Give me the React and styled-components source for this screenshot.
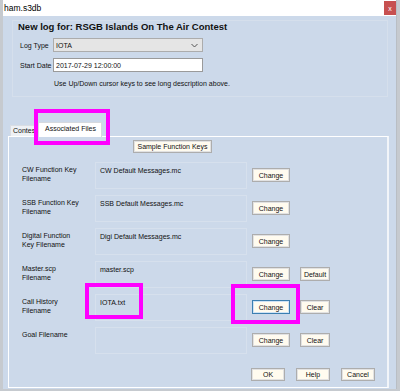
import styled, { createGlobalStyle } from "styled-components";

const GlobalStyle = createGlobalStyle`
  html, body {
    margin: 0;
    padding: 0;
    background: #c9cdd2;
  }
  * {
    box-sizing: border-box;
  }
`;

const Desktop = styled.div`
  position: relative;
  width: 400px;
  height: 391px;
  padding-left: 3px;
  background: #c6cacf;
  overflow: hidden;
  font-family: "Liberation Sans", Arial, sans-serif;
  color: #111;
`;

const Window = styled.div`
  width: 394px;
  height: 389px;
  display: flex;
  flex-direction: column;
  background: #ccd9ea;
  border-right: 1px solid #b9bec4;
`;

const TitleBar = styled.div`
  height: 16px;
  flex: none;
  display: flex;
  align-items: center;
  justify-content: space-between;
  background: #fff;
  padding-left: 1px;
  font-size: 8.5px;
  color: #000;
`;

const CloseButton = styled.div`
  width: 12px;
  height: 14px;
  margin-top: 1px;
  align-self: flex-start;
  background: #c75050;
  color: #fff;
  font-size: 7px;
  display: flex;
  align-items: center;
  justify-content: center;
`;

const Body = styled.div`
  flex: 1;
  display: flex;
  flex-direction: column;
  padding: 4px 0 0 0;
`;

const HeaderGroup = styled.div`
  margin-left: 9px;
  width: 376px;
  height: 77px;
  border: 1px solid #d5dfec;
  padding: 0 0 0 5px;
  display: flex;
  flex-direction: column;
`;

const Heading = styled.div`
  font-size: 9.5px;
  font-weight: bold;
  line-height: 12px;
  margin-bottom: 5px;
`;

const FieldRow = styled.div`
  display: flex;
  align-items: center;
  padding-left: 2px;
  margin-bottom: ${(p) => p.$gap || 0}px;
`;

const FieldLabel = styled.div`
  width: 33px;
  font-size: 7px;
  white-space: nowrap;
`;

const Select = styled.div`
  width: 150px;
  height: 14px;
  background: #e5e5e5;
  border: 1px solid #acacac;
  display: flex;
  align-items: center;
  justify-content: space-between;
  padding: 0 4px 0 2px;
  font-size: 7px;
`;

const Input = styled.div`
  width: 150px;
  height: 14px;
  background: #fff;
  border: 1px solid #9a9a9a;
  display: flex;
  align-items: center;
  padding-left: 2px;
  font-size: 7px;
`;

const Hint = styled.div`
  font-size: 7px;
  line-height: 9px;
  padding-left: 36px;
  margin-top: 7px;
`;

const TabStrip = styled.div`
  display: flex;
  align-items: flex-end;
  margin-top: 24px;
  padding-left: 7px;
  height: 15px;
  position: relative;
  z-index: 1;
`;

const Tab = styled.div`
  height: ${(p) => (p.$active ? 15 : 11)}px;
  width: ${(p) => (p.$active ? 64 : 30)}px;
  margin-left: ${(p) => (p.$active ? -2 : 0)}px;
  margin-bottom: ${(p) => (p.$active ? -1 : 0)}px;
  background: ${(p) => (p.$active ? "#fff" : "#eef1f5")};
  border: 1px solid ${(p) => (p.$active ? "#d6d9de" : "#d9dde3")};
  border-bottom: none;
  padding-left: ${(p) => (p.$active ? 6 : 2)}px;
  font-size: 7px;
  line-height: ${(p) => (p.$active ? 12 : 10)}px;
  white-space: nowrap;
  overflow: hidden;
  position: relative;
  z-index: ${(p) => (p.$active ? 2 : 1)};
`;

const Panel = styled.div`
  margin-left: 5px;
  width: 381px;
  border: 1px solid #fff;
  border-right: 2px solid #f2f5f9;
  padding: 3px 12px 6px 13px;
  display: flex;
  flex-direction: column;
`;

const Button = styled.div`
  width: ${(p) => p.$w || 38}px;
  height: ${(p) => p.$h || 14}px;
  flex: none;
  background: #fffbef;
  border: 1px solid ${(p) => (p.$focus ? "#3c7fb1" : "#adadad")};
  box-shadow: inset 0 0 0 1px ${(p) => (p.$focus ? "#cfe3f5" : "#e2e2e2")};
  display: flex;
  align-items: center;
  justify-content: center;
  font-size: 7px;
  white-space: nowrap;
`;

const SampleRow = styled.div`
  padding-left: 111px;
  margin-bottom: 9px;
`;

const FileList = styled.div`
  display: flex;
  flex-direction: column;
  gap: 6px;
`;

const FileRow = styled.div`
  display: flex;
  align-items: flex-start;
  height: 27px;
`;

const FileLabel = styled.div`
  width: 73px;
  padding-top: 3px;
  font-size: 7px;
  line-height: 9px;
`;

const ValueBox = styled.div`
  width: 152px;
  height: 27px;
  border: 1px solid #d6e0ed;
  padding: 3px 4px 0;
  font-size: 7px;
  line-height: 9px;
`;

const ButtonGroup = styled.div`
  display: flex;
  gap: 10px;
  margin-left: 5px;
  margin-top: 6px;
`;

const Footer = styled.div`
  display: flex;
  justify-content: flex-end;
  gap: 11px;
  margin-top: 14px;
`;

const Marker = styled.div`
  position: absolute;
  left: ${(p) => p.$x}px;
  top: ${(p) => p.$y}px;
  width: ${(p) => p.$w}px;
  height: ${(p) => p.$h}px;
  border: 4px solid #ff00ff;
  pointer-events: none;
  z-index: 5;
`;

const Chevron = () => (
  <svg width="7" height="5" viewBox="0 0 7 5">
    <path d="M0.5 1 L3.5 4 L6.5 1" fill="none" stroke="#555" strokeWidth="1" />
  </svg>
);

const files = [
  { label: ["CW Function Key", "Filename"], value: "CW Default Messages.mc" },
  { label: ["SSB Function Key", "Filename"], value: "SSB Default Messages.mc" },
  { label: ["Digital Function", "Key Filename"], value: "Digi Default Messages.mc" },
  { label: ["Master.scp", "Filename"], value: "master.scp", extra: "Default" },
  { label: ["Call History", "Filename"], value: "IOTA.txt", extra: "Clear", focus: true },
  { label: ["Goal Filename"], value: "", extra: "Clear" },
];

export default function App() {
  return (
    <>
      <GlobalStyle />
      <Desktop>
        <Window>
          <TitleBar>
            <span>ham.s3db</span>
            <CloseButton>x</CloseButton>
          </TitleBar>
          <Body>
            <HeaderGroup>
              <Heading>New log for: RSGB Islands On The Air Contest</Heading>
              <FieldRow $gap={6}>
                <FieldLabel>Log Type</FieldLabel>
                <Select>
                  <span>IOTA</span>
                  <Chevron />
                </Select>
              </FieldRow>
              <FieldRow>
                <FieldLabel>Start Date</FieldLabel>
                <Input>2017-07-29 12:00:00</Input>
              </FieldRow>
              <Hint>Use Up/Down cursor keys to see long description above.</Hint>
            </HeaderGroup>

            <TabStrip>
              <Tab>Contest</Tab>
              <Tab $active>Associated Files</Tab>
            </TabStrip>
            <Panel>
              <SampleRow>
                <Button $w={79} $h={13}>Sample Function Keys</Button>
              </SampleRow>
              <FileList>
                {files.map((f) => (
                  <FileRow key={f.label.join(" ")}>
                    <FileLabel>
                      {f.label.map((l) => (
                        <div key={l}>{l}</div>
                      ))}
                    </FileLabel>
                    <ValueBox>{f.value}</ValueBox>
                    <ButtonGroup>
                      <Button $focus={f.focus}>Change</Button>
                      {f.extra && <Button $w={30}>{f.extra}</Button>}
                    </ButtonGroup>
                  </FileRow>
                ))}
              </FileList>
              <Footer>
                <Button $w={34} $h={13}>OK</Button>
                <Button $w={34} $h={13}>Help</Button>
                <Button $w={34} $h={13}>Cancel</Button>
              </Footer>
            </Panel>
          </Body>
        </Window>
        <Marker $x={34} $y={109} $w={76} $h={36} />
        <Marker $x={85} $y={283} $w={58} $h={36} />
        <Marker $x={231} $y={284} $w={69} $h={40} />
      </Desktop>
    </>
  );
}
